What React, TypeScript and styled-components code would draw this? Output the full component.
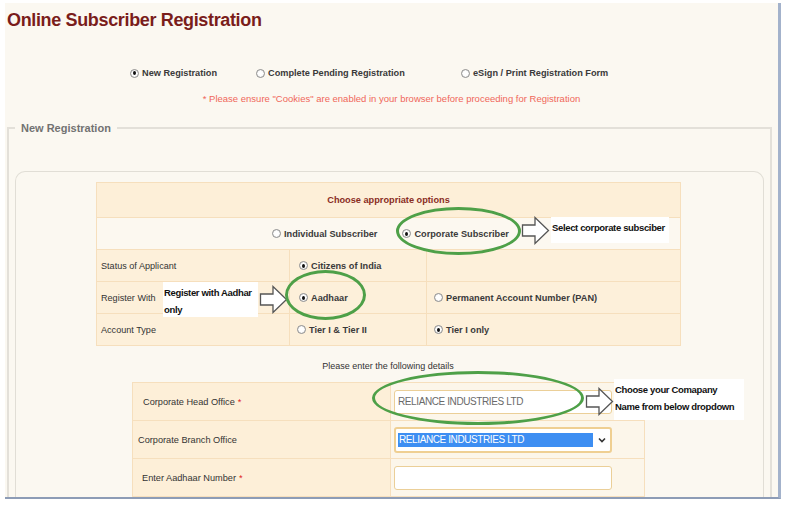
import styled, { createGlobalStyle } from "styled-components";

const SANS = '"Liberation Sans", Arial, sans-serif';

const GlobalStyle = createGlobalStyle`
  html, body {
    margin: 0;
    background: #ffffff;
    font-family: ${SANS};
  }
`;

const Screen = styled.div`
  margin: 3px 0 0 5px;
  width: 773px;
  height: 494px;
  background: #fbf8f1;
  border-right: 3px solid #a3b2cb;
  border-bottom: 2px solid #8d9cb6;
  overflow: hidden;
  display: flex;
  flex-direction: column;
`;

const Title = styled.h1`
  margin: 5px 0 0 2px;
  font-size: 18px;
  line-height: 24px;
  font-weight: 700;
  letter-spacing: -0.35px;
  color: #7a1d1b;
`;

const Divider = styled.div`
  margin: 9px 0 0 2px;
  width: 763px;
  height: 2px;
  background: #f2e5cc;
`;

const ModeRow = styled.div`
  margin: 27px 0 0 125px;
  display: grid;
  grid-template-columns: 126px 205px auto;
  align-items: center;
  height: 14px;
`;

const RadioLabel = styled.label`
  display: flex;
  align-items: center;
  gap: 3px;
  font-size: 9.2px;
  font-weight: 700;
  color: #3a3a3a;
  white-space: nowrap;
`;

const Radio = styled.span<{ $checked?: boolean }>`
  width: 7px;
  height: 7px;
  border-radius: 50%;
  border: 1px solid #8e8e8e;
  background: radial-gradient(circle, #ffffff 40%, #e2e2e2 100%);
  display: inline-flex;
  align-items: center;
  justify-content: center;
  flex: none;
  &::after {
    content: "";
    width: 3px;
    height: 4px;
    border-radius: 50%;
    background: ${(p) => (p.$checked ? "#111" : "transparent")};
  }
`;

const CookieNote = styled.div`
  margin-top: 14px;
  text-align: center;
  font-size: 9.5px;
  line-height: 14px;
  color: #f0675a;
  white-space: nowrap;
`;

const Fieldset = styled.fieldset`
  margin: 15px 0 0 2px;
  padding: 0 6px;
  width: 749px;
  min-width: 0;
  border: 2px solid #e3e0d9;
  border-bottom: none;
  flex: 1;
`;

const Legend = styled.legend`
  margin-left: 0;
  padding: 0 6px;
  font-size: 11px;
  line-height: 14px;
  font-weight: 700;
  color: #727272;
`;

const InnerBox = styled.div`
  margin-top: 36px;
  height: 340px;
  border: 1px solid #e1ded6;
  border-bottom: none;
  border-radius: 10px 10px 0 0;
  padding: 10px 0 0 80px;
`;

const OptionsArea = styled.div`
  position: relative;
  width: 584px;
`;

const Grid = styled.table`
  border-collapse: collapse;
  table-layout: fixed;
  width: 100%;
`;

const HeadCell = styled.td`
  height: 32px;
  background: #fdefd8;
  border: 1px solid #f6dfbd;
  text-align: center;
  font-size: 9.2px;
  font-weight: 700;
  color: #8a2d1e;
`;

const Cell = styled.td<{ $light?: boolean; $pad?: number }>`
  height: 31px;
  padding: 0 0 0 ${(p) => p.$pad ?? 6}px;
  background: ${(p) => (p.$light ? "#fcf8f0" : "#fdf0da")};
  border: 1px solid #f6dfbd;
  font-size: 9.1px;
  color: #333;
  vertical-align: middle;
`;

const SplitRow = styled.div`
  display: flex;
  align-items: center;
  gap: 25px;
  padding-left: 175px;
`;

const Ellipse = styled.span<{ $x: number; $y: number; $w: number; $h: number }>`
  position: absolute;
  left: ${(p) => p.$x}px;
  top: ${(p) => p.$y}px;
  width: ${(p) => p.$w}px;
  height: ${(p) => p.$h}px;
  border: 3px solid #4ea048;
  border-radius: 50%;
  box-sizing: border-box;
  pointer-events: none;
`;

const Callout = styled.div<{ $x: number; $y: number; $w: number; $h: number }>`
  position: absolute;
  left: ${(p) => p.$x}px;
  top: ${(p) => p.$y}px;
  width: ${(p) => p.$w}px;
  height: ${(p) => p.$h}px;
  background: #ffffff;
  padding: 2px 1px;
  box-sizing: border-box;
  font-size: 9.5px;
  line-height: 17px;
  font-weight: 700;
  letter-spacing: -0.35px;
  color: #111;
`;

const ArrowBox = styled.svg<{ $x: number; $y: number }>`
  position: absolute;
  left: ${(p) => p.$x}px;
  top: ${(p) => p.$y}px;
`;

const DetailsHint = styled.div`
  margin-top: 14px;
  text-align: center;
  width: 584px;
  font-size: 9px;
  line-height: 12px;
  color: #333;
`;

const DetailsArea = styled.div`
  position: relative;
  margin: 10px 0 0 36px;
  width: 513px;
`;

const FieldLabel = styled.td<{ $indent: number }>`
  width: 258px;
  box-sizing: border-box;
  height: 38px;
  padding-left: ${(p) => p.$indent}px;
  background: #fdefd8;
  border: 1px solid #f6dfbd;
  font-size: 9.2px;
  color: #333;
`;

const FieldCell = styled.td`
  padding-left: 3px;
  background: #fcf6ea;
  border: 1px solid #f6dfbd;
`;

const Required = styled.span`
  color: #e02020;
  margin-left: 3px;
`;

const TextBox = styled.div`
  width: 218px;
  height: 24px;
  box-sizing: border-box;
  border: 1px solid #ebcf98;
  border-radius: 3px;
  background: #ffffff;
  padding-left: 3px;
  display: flex;
  align-items: center;
  font-size: 10px;
  letter-spacing: -0.4px;
  color: #6a6a6a;
`;

const SelectBox = styled.div`
  width: 218px;
  height: 26px;
  box-sizing: border-box;
  border: 2px solid #efcf92;
  border-radius: 3px;
  background: #ffffff;
  padding: 0 4px 0 2px;
  display: flex;
  align-items: center;
  justify-content: space-between;
  font-size: 10px;
  letter-spacing: -0.4px;
`;

const Highlight = styled.span`
  flex: 1;
  margin-right: 5px;
  background: #3d8ef2;
  color: #ffffff;
  line-height: 14px;
  padding-left: 1px;
`;

function Arrow({ x, y }: { x: number; y: number }) {
  return (
    <ArrowBox $x={x} $y={y} width="29" height="29" viewBox="0 0 29 29">
      <path
        d="M1.5 9 H14 V1.5 L27.5 14.5 L14 27.5 V20 H1.5 Z"
        fill="#ffffff"
        stroke="#555"
        strokeWidth="1.3"
      />
    </ArrowBox>
  );
}

export default function App() {
  return (
    <>
      <GlobalStyle />
      <Screen>
        <Title>Online Subscriber Registration</Title>
        <Divider />
        <ModeRow>
          <RadioLabel>
            <Radio $checked /> New Registration
          </RadioLabel>
          <RadioLabel>
            <Radio /> Complete Pending Registration
          </RadioLabel>
          <RadioLabel>
            <Radio /> eSign / Print Registration Form
          </RadioLabel>
        </ModeRow>
        <CookieNote>
          * Please ensure "Cookies" are enabled in your browser before proceeding for Registration
        </CookieNote>
        <Fieldset>
          <Legend>New Registration</Legend>
          <InnerBox>
            <OptionsArea>
              <Grid>
                <colgroup>
                  <col style={{ width: 193 }} />
                  <col style={{ width: 137 }} />
                  <col style={{ width: 254 }} />
                </colgroup>
                <tbody>
                  <tr>
                    <HeadCell colSpan={3}>Choose appropriate options</HeadCell>
                  </tr>
                  <tr>
                    <Cell colSpan={3} $light $pad={0}>
                      <SplitRow>
                        <RadioLabel>
                          <Radio /> Individual Subscriber
                        </RadioLabel>
                        <RadioLabel>
                          <Radio $checked /> Corporate Subscriber
                        </RadioLabel>
                      </SplitRow>
                    </Cell>
                  </tr>
                  <tr>
                    <Cell $pad={4}>Status of Applicant</Cell>
                    <Cell $pad={9}>
                      <RadioLabel>
                        <Radio $checked /> Citizens of India
                      </RadioLabel>
                    </Cell>
                    <Cell />
                  </tr>
                  <tr>
                    <Cell $pad={4}>Register With</Cell>
                    <Cell $pad={9}>
                      <RadioLabel>
                        <Radio $checked /> Aadhaar
                      </RadioLabel>
                    </Cell>
                    <Cell $pad={7}>
                      <RadioLabel>
                        <Radio /> Permanent Account Number (PAN)
                      </RadioLabel>
                    </Cell>
                  </tr>
                  <tr>
                    <Cell $pad={4}>Account Type</Cell>
                    <Cell $pad={7}>
                      <RadioLabel>
                        <Radio /> Tier I &amp; Tier II
                      </RadioLabel>
                    </Cell>
                    <Cell $pad={7}>
                      <RadioLabel>
                        <Radio $checked /> Tier I only
                      </RadioLabel>
                    </Cell>
                  </tr>
                </tbody>
              </Grid>
              <Ellipse $x={300} $y={25} $w={125} $h={48} />
              <Arrow x={425} y={34} />
              <Callout $x={455} $y={35} $w={118} $h={26}>
                Select corporate subsciber
              </Callout>
              <Callout $x={67} $y={100} $w={95} $h={35}>
                Register with Aadhar only
              </Callout>
              <Arrow x={163} y={103} />
              <Ellipse $x={189} $y={88} $w={81} $h={50} />
            </OptionsArea>
            <DetailsHint>Please enter the following details</DetailsHint>
            <DetailsArea>
              <Grid>
                <tbody>
                  <tr>
                    <FieldLabel $indent={10}>
                      Corporate Head Office<Required>*</Required>
                    </FieldLabel>
                    <FieldCell>
                      <TextBox>RELIANCE INDUSTRIES LTD</TextBox>
                    </FieldCell>
                  </tr>
                  <tr>
                    <FieldLabel $indent={5}>Corporate Branch Office</FieldLabel>
                    <FieldCell>
                      <SelectBox>
                        <Highlight>RELIANCE INDUSTRIES LTD</Highlight>
                        <svg width="8" height="6" viewBox="0 0 8 6">
                          <path d="M1 1.5 L4 4.5 L7 1.5" fill="none" stroke="#333" strokeWidth="1.6" />
                        </svg>
                      </SelectBox>
                    </FieldCell>
                  </tr>
                  <tr>
                    <FieldLabel $indent={9}>
                      Enter Aadhaar Number<Required>*</Required>
                    </FieldLabel>
                    <FieldCell>
                      <TextBox />
                    </FieldCell>
                  </tr>
                </tbody>
              </Grid>
              <Ellipse $x={240} $y={-11} $w={212} $h={54} />
              <Arrow x={453} y={5} />
              <Callout $x={482} $y={-3} $w={130} $h={41}>
                Choose your Comapany Name from below dropdown
              </Callout>
            </DetailsArea>
          </InnerBox>
        </Fieldset>
      </Screen>
    </>
  );
}
